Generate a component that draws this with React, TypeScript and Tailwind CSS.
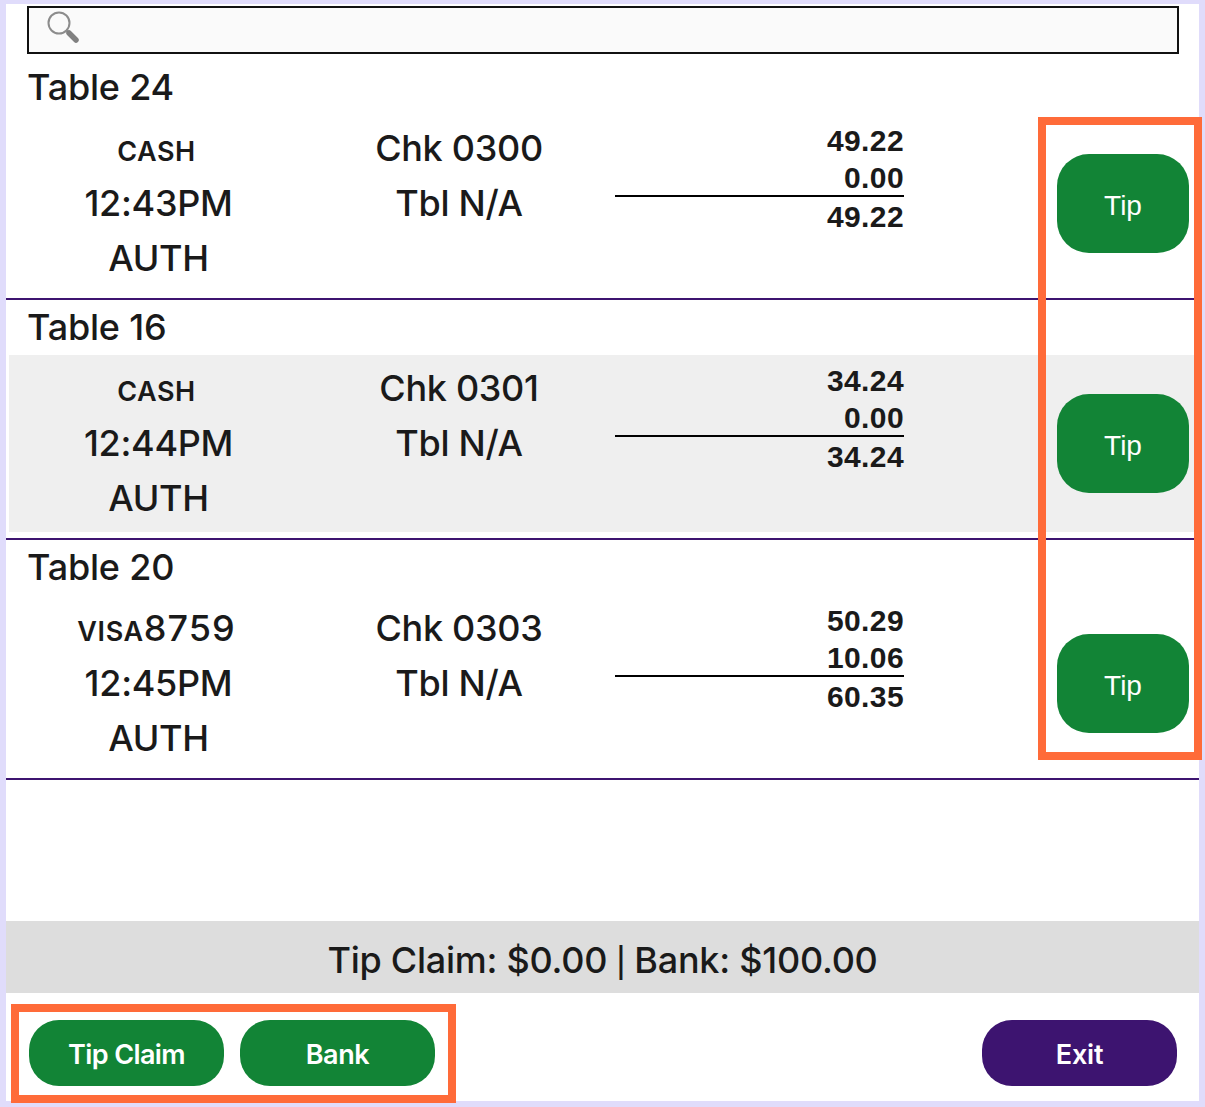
import React from 'react';

interface Check {
  table: string;
  tender: string;
  tenderNum?: string;
  time: string;
  chk: string;
  amount: string;
  tip: string;
  total: string;
  shaded?: boolean;
}

const checks: Check[] = [
  { table: 'Table 24', tender: 'CASH', time: '12:43PM', chk: 'Chk 0300', amount: '49.22', tip: '0.00', total: '49.22' },
  { table: 'Table 16', tender: 'CASH', time: '12:44PM', chk: 'Chk 0301', amount: '34.24', tip: '0.00', total: '34.24', shaded: true },
  { table: 'Table 20', tender: 'VISA', tenderNum: '8759', time: '12:45PM', chk: 'Chk 0303', amount: '50.29', tip: '10.06', total: '60.35' },
];

const SearchIcon = () => (
  <svg width="36" height="36" viewBox="0 0 36 36" className="ml-[16px] mt-[2px]">
    <circle cx="14" cy="13" r="10.5" fill="none" stroke="#8c8c8c" strokeWidth="2" />
    <path d="M21 20 L24 23" stroke="#8c8c8c" strokeWidth="2" />
    <path d="M24 23 L31 30" stroke="#808080" strokeWidth="5.5" strokeLinecap="round" />
  </svg>
);

const CheckRow: React.FC<{ check: Check }> = ({ check }) => (
  <div className="h-[240px] border-b-2 border-[#3d1470] shrink-0">
    <div className="h-[55px] pl-[21px] pb-[2px] flex items-center text-[36px] font-medium tracking-[-0.2px] text-[#1a1a1a]">{check.table}</div>
    <div className={`h-[177px] ml-[3px] mr-[4px] flex ${check.shaded ? 'bg-[#efefef]' : ''}`}>
      <div className="w-[299px] pt-[6px] flex flex-col items-center text-[36px] font-medium tracking-[-0.3px] leading-[55px] text-[#1a1a1a]">
        <div className="h-[55px] -translate-x-[2px]">
          <span className="text-[27px] font-semibold tracking-[0.6px]">{check.tender}</span>
          <span className="tracking-[1px]">{check.tenderNum}</span>
        </div>
        <div>{check.time}</div>
        <div>AUTH</div>
      </div>
      <div className="w-[302px] pt-[6px] flex flex-col items-center text-[36px] font-medium tracking-[-0.3px] leading-[55px] text-[#1a1a1a]">
        <div>{check.chk}</div>
        <div>Tbl N/A</div>
      </div>
      <div className="w-[289px] ml-[5px] pt-[7px] flex flex-col text-[30px] font-bold tracking-[0.4px] font-['Liberation_Sans',sans-serif] text-[#1a1a1a] text-right">
        <div className="leading-[38px]">{check.amount}</div>
        <div className="leading-[35px] border-b-2 border-black">{check.tip}</div>
        <div className="leading-[40px]">{check.total}</div>
      </div>
      <button className="ml-[153px] mt-[39px] w-[132px] h-[99px] pt-[4px] rounded-[32px] bg-[#128436] text-white text-[28px] font-['Liberation_Sans',sans-serif]">Tip</button>
    </div>
  </div>
);

export default function App() {
  return (
    <div className="relative w-[1205px] h-[1107px] flex flex-col bg-white border-solid border-[#e0dcfb] border-t-4 border-l-[6px] border-r-[6px] border-b-[6px] font-['Inter','Liberation_Sans',sans-serif]">
      <div className="h-[48px] ml-[21px] mt-[2px] mr-[20px] mb-[6px] border-2 border-[#111] bg-[#fafafa] flex items-start shrink-0">
        <SearchIcon />
      </div>

      {checks.map((c) => (
        <CheckRow key={c.chk} check={c} />
      ))}

      <div className="mt-auto h-[72px] pt-[6px] bg-[#dddddd] flex items-center justify-center text-[36px] font-medium tracking-[-0.25px] text-[#1a1a1a]">
        Tip Claim: $0.00 <span className="mx-[9px] font-['Liberation_Sans',sans-serif] font-normal">|</span> Bank: $100.00
      </div>

      <div className="h-[108px] pl-[23px] pr-[22px] pt-[27px] flex items-start">
        <button className="w-[195px] h-[66px] rounded-[30px] pt-[4px] bg-[#128436] text-white text-[27px] font-semibold tracking-[-0.6px]">Tip Claim</button>
        <button className="w-[195px] h-[66px] ml-[16px] rounded-[30px] pt-[4px] bg-[#128436] text-white text-[27px] font-semibold tracking-[-0.4px]">Bank</button>
        <button className="w-[195px] h-[66px] ml-auto rounded-[30px] pt-[4px] bg-[#3d1470] text-white text-[27px] font-semibold tracking-[-0.2px]">Exit</button>
      </div>

      <div className="absolute left-[1032px] top-[113px] w-[164px] h-[643px] border-[8px] border-[#ff6b39] pointer-events-none" />
      <div className="absolute left-[5px] top-[1000px] w-[445px] h-[99px] border-[8px] border-[#ff6b39] pointer-events-none" />
    </div>
  );
}
